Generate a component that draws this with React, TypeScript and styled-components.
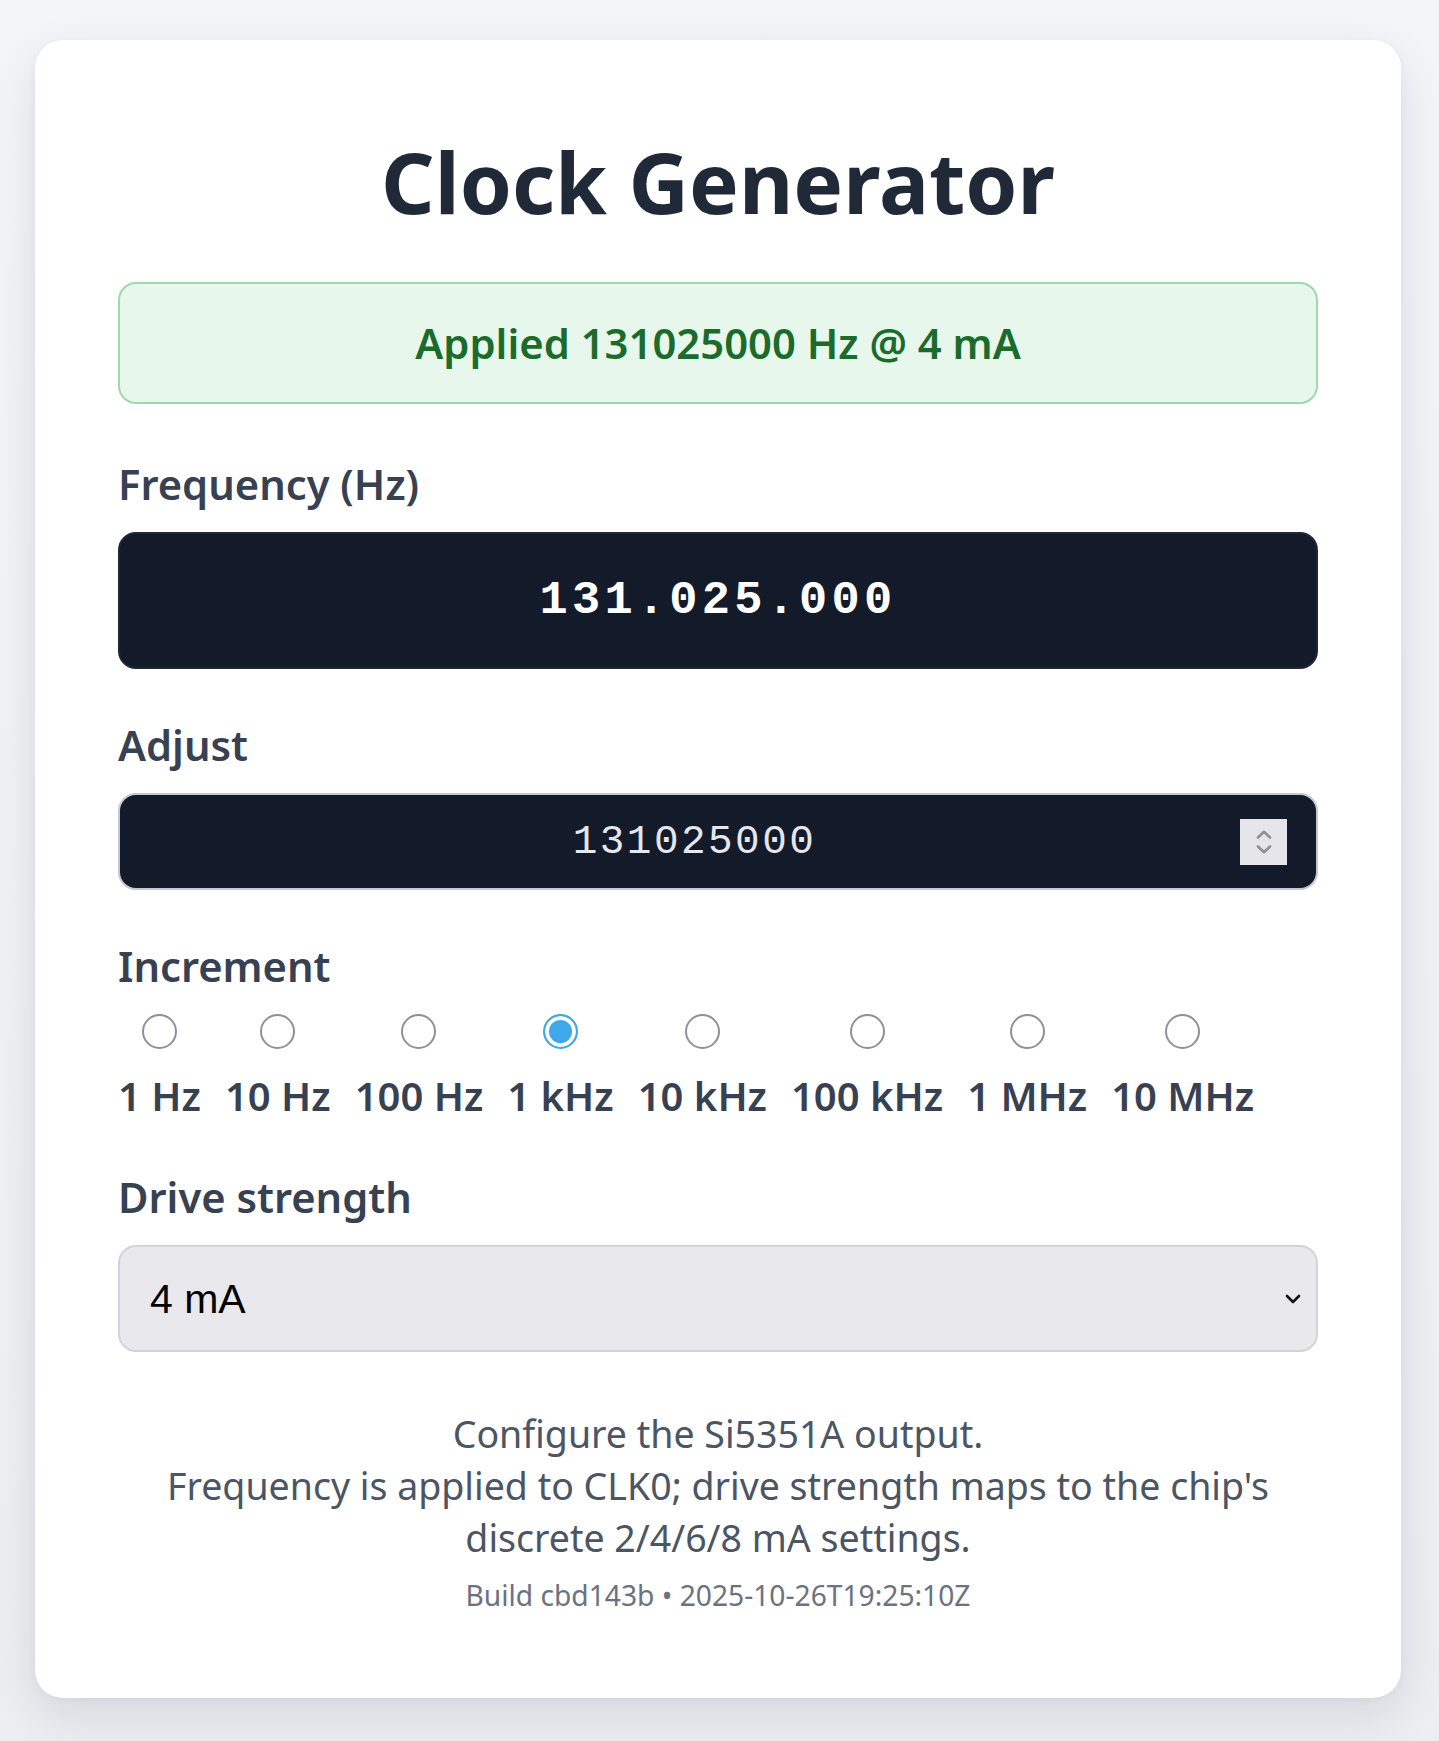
import { useState } from 'react';
import styled, { createGlobalStyle } from 'styled-components';

const GlobalStyle = createGlobalStyle`
  * { box-sizing: border-box; }
  html, body { margin: 0; padding: 0; }
  body {
    background: linear-gradient(180deg, #f4f5f9 0%, #eceef2 100%);
    font-family: 'Noto Sans', 'Open Sans', sans-serif;
  }
`;

const Page = styled.main`
  padding: 40px 38px 44px 35px;
`;

const Card = styled.section`
  background: #fff;
  border-radius: 28px;
  padding: 92px 83px 83px;
  box-shadow: 0 18px 48px rgba(17, 24, 39, 0.1), 0 2px 8px rgba(17, 24, 39, 0.04);
`;

const Title = styled.h1`
  margin: 0 0 50px;
  text-align: center;
  font-size: 83.6px;
  line-height: 100px;
  font-weight: 700;
  color: #1f2937;
`;

const Status = styled.div`
  border: 2px solid #9fd8aa;
  background: #e7f7ec;
  border-radius: 18px;
  padding: 33px 24px;
  text-align: center;
  font-size: 41.8px;
  line-height: 52px;
  font-weight: 600;
  color: #1b6b2c;
  margin-bottom: 54px;
`;

const Form = styled.div`
  display: flex;
  flex-direction: column;
  gap: 50px;
`;

const Field = styled.div`
  display: flex;
  flex-direction: column;
  gap: 22px;
`;

const Label = styled.label`
  font-size: 41.7px;
  line-height: 52px;
  font-weight: 600;
  color: #374151;
`;

const Display = styled.output`
  display: flex;
  align-items: center;
  justify-content: center;
  height: 137px;
  background: #131a29;
  border: 2px solid #1f2737;
  border-radius: 18px;
  font-family: 'Liberation Mono', monospace;
  font-weight: 700;
  font-size: 47px;
  letter-spacing: 0.09em;
  color: #fff;
`;

const AdjustBox = styled.div`
  display: flex;
  align-items: center;
  height: 97px;
  padding: 0 29px;
  background: #131a29;
  border: 2px solid #c6c8d0;
  border-radius: 18px;
`;

const NumberInput = styled.input`
  flex: 1;
  min-width: 0;
  background: transparent;
  border: none;
  outline: none;
  text-align: center;
  color: #e5e7eb;
  font-family: 'Liberation Mono', monospace;
  font-size: 41px;
  letter-spacing: 0.06em;
  -moz-appearance: textfield;
  &::-webkit-inner-spin-button,
  &::-webkit-outer-spin-button {
    -webkit-appearance: none;
    margin: 0;
  }
`;

const Spinner = styled.div`
  width: 47px;
  height: 46px;
  background: #e5e5ea;
  display: flex;
  flex-direction: column;
  align-items: center;
  justify-content: center;
  gap: 6px;
  cursor: pointer;
`;

const Options = styled.div`
  display: flex;
  gap: 24px;
`;

const Option = styled.label`
  display: flex;
  flex-direction: column;
  align-items: center;
  gap: 22px;
  font-size: 40px;
  line-height: 50px;
  font-weight: 600;
  color: #374151;
  white-space: nowrap;
  cursor: pointer;
`;

const Radio = styled.input.attrs({ type: 'radio' })`
  appearance: none;
  margin: 0;
  width: 35px;
  height: 35px;
  border-radius: 50%;
  border: 2px solid #8f8f9d;
  background: #fff;
  &:checked {
    border: 2.5px solid #3ea8ea;
    box-shadow: inset 0 0 0 4px #fff;
    background: #3ea8ea;
  }
`;

const SelectWrap = styled.div`
  position: relative;
`;

const Select = styled.select`
  appearance: none;
  width: 100%;
  height: 107px;
  padding: 0 60px 0 30px;
  background: #e8e8ed;
  border: 2px solid #d3d4da;
  border-radius: 18px;
  font-family: 'Liberation Sans', Arial, sans-serif;
  font-size: 41px;
  color: #000;
  outline: none;
`;

const Chevron = styled.svg`
  position: absolute;
  right: 17px;
  top: 50%;
  transform: translateY(-50%);
  pointer-events: none;
`;

const Footer = styled.footer`
  margin-top: 6px;
  text-align: center;
`;

const Note = styled.p`
  margin: 0;
  font-size: 37.5px;
  line-height: 52.2px;
  color: #4b5563;
`;

const Build = styled.p`
  margin: 10px 0 0;
  font-size: 28.2px;
  line-height: 40px;
  color: #6b7280;
`;

const steps = [
  { label: '1 Hz', value: 1 },
  { label: '10 Hz', value: 10 },
  { label: '100 Hz', value: 100 },
  { label: '1 kHz', value: 1000 },
  { label: '10 kHz', value: 10000 },
  { label: '100 kHz', value: 100000 },
  { label: '1 MHz', value: 1000000 },
  { label: '10 MHz', value: 10000000 },
];

const formatHz = (hz: number) => String(hz).replace(/\B(?=(\d{3})+(?!\d))/g, '.');

const App = () => {
  const [freq, setFreq] = useState(131025000);
  const [step, setStep] = useState(1000);
  const [drive, setDrive] = useState('4');

  return (
    <Page>
      <GlobalStyle />
      <Card>
        <Title>Clock Generator</Title>
        <Status>Applied 131025000 Hz @ 4 mA</Status>
        <Form>
          <Field>
            <Label>Frequency (Hz)</Label>
            <Display>{formatHz(freq)}</Display>
          </Field>
          <Field>
            <Label htmlFor='adjust'>Adjust</Label>
            <AdjustBox>
              <NumberInput
                id='adjust'
                type='number'
                value={freq}
                step={step}
                onChange={(e) => setFreq(Number(e.target.value))}
              />
              <Spinner>
                <svg width='16' height='9' viewBox='0 0 16 9' onClick={() => setFreq(freq + step)}>
                  <path d='M2 7.5 8 1.8l6 5.7' fill='none' stroke='#8f8f9b' strokeWidth='2.6' strokeLinecap='round' strokeLinejoin='round' />
                </svg>
                <svg width='16' height='9' viewBox='0 0 16 9' onClick={() => setFreq(Math.max(0, freq - step))}>
                  <path d='M2 1.5 8 7.2l6-5.7' fill='none' stroke='#8f8f9b' strokeWidth='2.6' strokeLinecap='round' strokeLinejoin='round' />
                </svg>
              </Spinner>
            </AdjustBox>
          </Field>
          <Field>
            <Label>Increment</Label>
            <Options>
              {steps.map((s) => (
                <Option key={s.value}>
                  <Radio name='step' checked={step === s.value} onChange={() => setStep(s.value)} />
                  {s.label}
                </Option>
              ))}
            </Options>
          </Field>
          <Field>
            <Label htmlFor='drive'>Drive strength</Label>
            <SelectWrap>
              <Select id='drive' value={drive} onChange={(e) => setDrive(e.target.value)}>
                <option value='2'>2 mA</option>
                <option value='4'>4 mA</option>
                <option value='6'>6 mA</option>
                <option value='8'>8 mA</option>
              </Select>
              <Chevron width='16' height='10' viewBox='0 0 16 10'>
                <path d='M2 2 8 8l6-6' fill='none' stroke='#111' strokeWidth='2.6' strokeLinecap='round' strokeLinejoin='round' />
              </Chevron>
            </SelectWrap>
          </Field>
          <Footer>
            <Note>
              Configure the Si5351A output.
              <br />
              Frequency is applied to CLK0; drive strength maps to the chip's discrete 2/4/6/8 mA settings.
            </Note>
            <Build>Build cbd143b • 2025-10-26T19:25:10Z</Build>
          </Footer>
        </Form>
      </Card>
    </Page>
  );
};

export default App;
